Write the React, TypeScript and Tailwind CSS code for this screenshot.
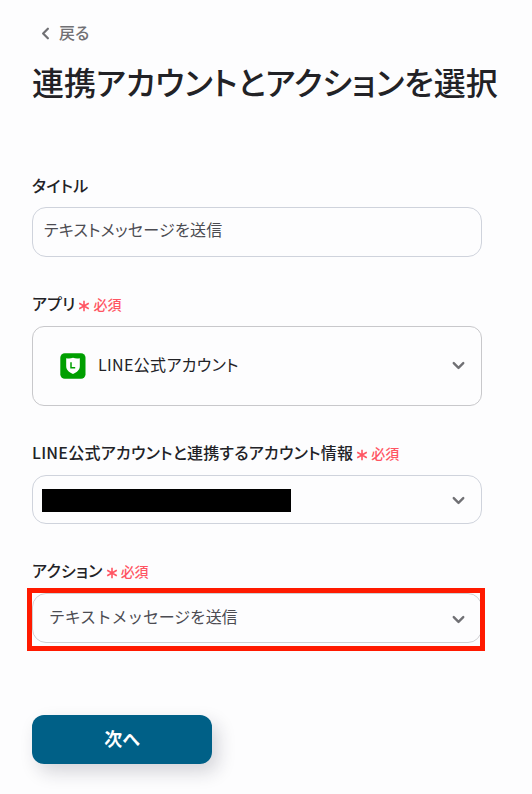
import { ChevronDown, ChevronLeft } from "lucide-react";
import type { ReactNode } from "react";
import { twMerge } from "tailwind-merge";

function LineOfficialIcon() {
  return (
    <svg viewBox="0 0 26 26" className="h-[26px] w-[26px] shrink-0">
      <rect x=".3" y=".3" width="25.2" height="25.4" rx="4.5" fill="#009f00" />
      <path
        d="M13 4.800c2.100.8 4.300.8 6.800.5V13.300c0 3.700-2.700 5.900-6.800 7.700-4.100-1.800-6.800-4-6.800-7.700V5.300c2.500.3 4.700.3 6.800-.5Z"
        fill="#fff"
      />
      <path d="M11 9.200v5.600h4.200" fill="none" stroke="#009f00" strokeWidth="1.5" />
    </svg>
  );
}

function RequiredMark() {
  return (
    <svg
      viewBox="0 0 12 12"
      className="mt-[3px] h-3 w-3 shrink-0"
      fill="none"
      stroke="currentColor"
      strokeWidth="1.6"
    >
      <path d="M6 .7v10.600M1.200 3.300l9.600 5.400M10.800 3.300l-9.600 5.400" />
    </svg>
  );
}

type FieldProps = {
  label: string;
  required?: boolean;
  children: ReactNode;
};

function Field({ label, required = false, children }: FieldProps) {
  return (
    <div className="flex flex-col gap-2.5">
      <div className="flex h-6 items-center whitespace-nowrap">
        <span
          className={twMerge(
            "text-base leading-6 font-medium tracking-[0.25px]",
            required && "-mt-0.5",
          )}
        >
          {label}
        </span>
        {required ? (
          <span className="ml-[3px] flex items-center gap-[3px] text-[#ff5563]">
            <RequiredMark />
            <span className="text-sm leading-6 font-medium">必須</span>
          </span>
        ) : null}
      </div>
      {children}
    </div>
  );
}

type SelectBoxProps = {
  className?: string;
  children: ReactNode;
};

function SelectBox({ className, children }: SelectBoxProps) {
  return (
    <button
      type="button"
      className={twMerge(
        "flex h-[49px] w-full items-center justify-between rounded-[14px] border border-[#cfd3dc] pr-[13px] pl-[9px] text-left",
        className,
      )}
    >
      {children}
      <ChevronDown className="h-[19px] w-[19px] text-[#707074]" strokeWidth={3} />
    </button>
  );
}

export default function App() {
  return (
    <main
      lang="ja"
      className="h-[794px] w-[532px] overflow-hidden bg-[#fdfdfe] pt-[21px] pl-8 font-['Noto_Sans_CJK_JP',sans-serif] text-[#222226] [font-feature-settings:'palt']"
    >
      <button type="button" className="ml-1 flex h-6 items-center gap-1 text-[#707074]">
        <ChevronLeft className="h-[19px] w-[19px]" strokeWidth={2.800} />
        <span className="-mt-0.5 text-base leading-6 font-medium">戻る</span>
      </button>

      <h1 className="mt-3 text-[32px] leading-[48px] font-medium whitespace-nowrap">
        連携アカウントとアクションを選択
      </h1>

      <form className="mt-[68px] flex w-[450px] flex-col gap-[35px]">
        <Field label="タイトル">
          <input
            readOnly
            value="テキストメッセージを送信"
            className="h-[50px] w-full rounded-[14px] border border-[#cfd3dc] px-[11px] pb-1.5 text-base tracking-[0.25px] text-[#4c4c52] outline-none"
          />
        </Field>

        <Field label="アプリ" required>
          <SelectBox className="h-20 rounded-xl border-[#c8c8cb] pb-px pl-[27px]">
            <span className="flex items-center gap-3">
              <LineOfficialIcon />
              <span className="pb-1 text-base tracking-[0.35px]">LINE公式アカウント</span>
            </span>
          </SelectBox>
        </Field>

        <Field label="LINE公式アカウントと連携するアカウント情報" required>
          <SelectBox className="pt-0.5">
            <span className="h-[23px] w-[249px] bg-black" />
          </SelectBox>
        </Field>

        <Field label="アクション" required>
          <div className="-mt-[5px] -ml-[5px] w-[458px] overflow-hidden border-5 border-[#ff1a00] pb-[3px]">
            <SelectBox className="h-[50px] w-[450px] border-[#d0d0d3] pt-0.5 pl-4">
              <span className="pb-1.5 text-base tracking-[-0.25px] text-[#4c4c52] [font-feature-settings:normal]">
                テキストメッセージを送信
              </span>
            </SelectBox>
          </div>
        </Field>
      </form>

      <button
        type="button"
        className="mt-16 flex h-[49px] w-[180px] items-center justify-center rounded-xl bg-[#006087] pb-1 text-lg font-bold text-white shadow-[6px_8px_18px_rgba(30,30,50,0.18)]"
      >
        次へ
      </button>
    </main>
  );
}
